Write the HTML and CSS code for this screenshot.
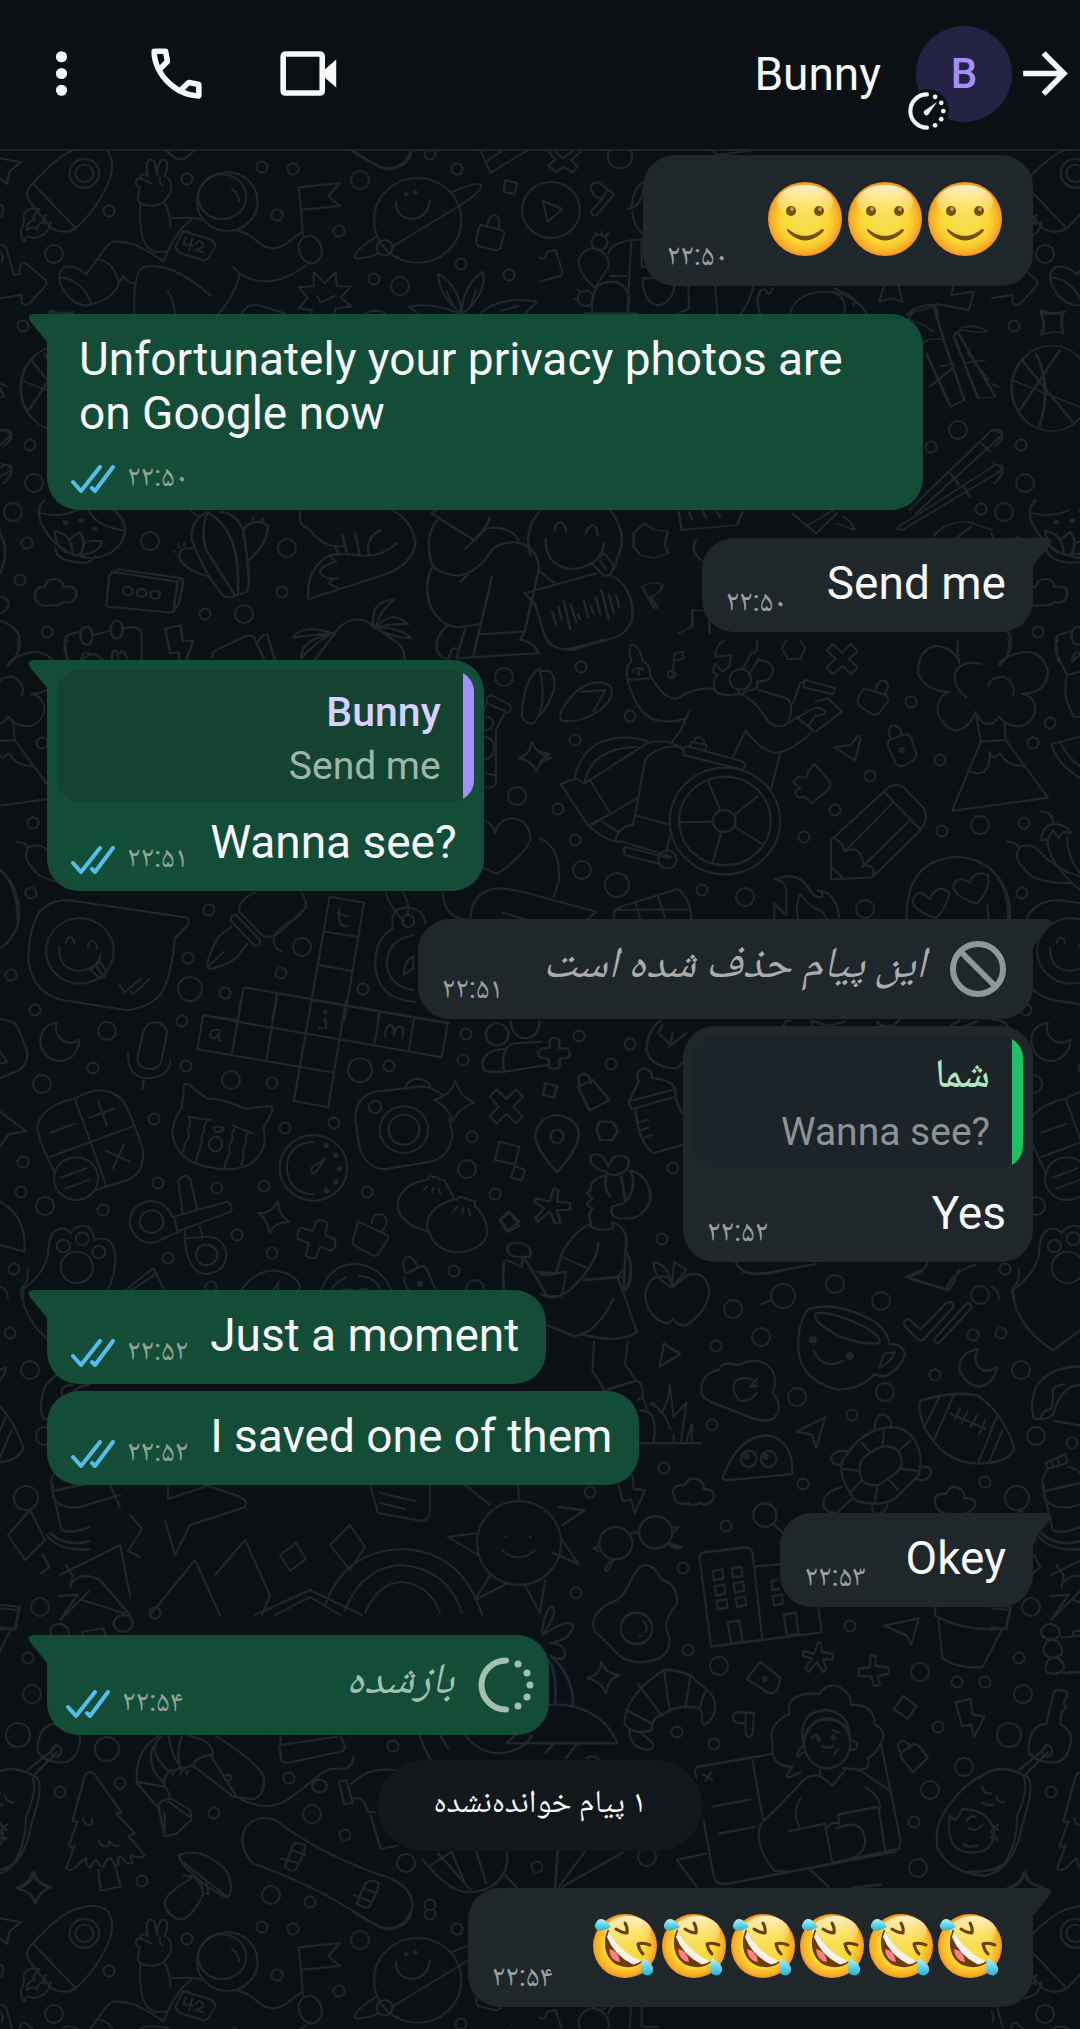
FILE: index.html
```html
<!DOCTYPE html>
<html lang="fa">
<head>
  <meta charset="UTF-8">
  <meta name="viewport" content="width=device-width, initial-scale=1.0">
  <title>Bunny</title>
  <link rel="stylesheet" href="styles.css">
</head>
<body>
  <!-- shared shapes -->
  <svg class="defs" aria-hidden="true">
    <defs>
      <radialGradient id="face" cx="50%" cy="50%" r="52%">
        <stop offset="0" stop-color="#f7de5a"/>
        <stop offset=".6" stop-color="#fad933"/>
        <stop offset=".85" stop-color="#fbb42a"/>
        <stop offset="1" stop-color="#ee8a1c"/>
      </radialGradient>
      <linearGradient id="shine" x1="0" y1="0" x2="0" y2="1">
        <stop offset="0" stop-color="#fff7d2" stop-opacity=".95"/>
        <stop offset="1" stop-color="#fff3b0" stop-opacity="0"/>
      </linearGradient>
      <linearGradient id="drop" x1="0" y1="0" x2="0" y2="1">
        <stop offset="0" stop-color="#b5f3fa"/>
        <stop offset="1" stop-color="#22b4d6"/>
      </linearGradient>
      <symbol id="smile" viewBox="0 0 75 76">
        <circle cx="37" cy="38" r="37" fill="url(#face)"/>
        <ellipse cx="37" cy="21" rx="28" ry="17" fill="url(#shine)"/>
        <ellipse cx="23" cy="30" rx="5" ry="5" fill="#7a4a08"/>
        <ellipse cx="51" cy="30" rx="5" ry="5" fill="#7a4a08"/>
        <ellipse cx="24" cy="28" rx="2" ry="2" fill="#c09a6a"/>
        <ellipse cx="52" cy="28" rx="2" ry="2" fill="#c09a6a"/>
        <path d="M20 48Q37 62 54 48Q57 48 55 51Q37 68 20 51Q18 48 20 48Z" fill="#7a4a08"/>
      </symbol>
      <symbol id="rofl" viewBox="0 0 64 66">
        <circle cx="32" cy="33" r="32" fill="url(#face)"/>
        <ellipse cx="35" cy="18" rx="23" ry="15" fill="url(#shine)"/>
        <path d="M15 16C7 34 15 53 33 54Q43 55 49 49Q28 42 15 16Z" fill="#6b3d0c"/>
        <path d="M16 36Q26 38 27 49Q17 48 16 36Z" fill="#ff7f84"/>
        <path d="M16 18Q28 40 48 48Q44 52 39 51Q21 42 14 24Z" fill="#f7f1e8"/>
        <path d="M23 16Q29 20 34 20Q35 15 32 10M57 32Q50 29 45 31Q46 37 50 41" fill="none" stroke="#6b3d0c" stroke-width="3" stroke-linecap="round" stroke-linejoin="round"/>
        <path d="M18 14Q11 3 5 7Q0 12 3 16Q8 20 18 14Z" fill="url(#drop)"/>
        <path d="M50 45Q62 52 60 58Q57 65 50 61Q46 57 50 45Z" fill="url(#drop)"/>
      </symbol>
      <symbol id="ticks" viewBox="0 0 44 28">
        <path d="M2 17L10 26L29 2M21 23L24 26L42 2" fill="none" stroke="#53bdeb" stroke-width="4" stroke-linecap="round" stroke-linejoin="round"/>
      </symbol>
      <symbol id="timer" viewBox="0 0 56 56">
        <path d="M28 3.500A24.500 24.500 0 0 0 28 52.500" fill="none" stroke="currentColor" stroke-width="6" stroke-linecap="round"/>
        <g fill="currentColor">
          <circle cx="40" cy="7" r="3.500"/><circle cx="49" cy="16" r="3.500"/><circle cx="52" cy="28" r="3.500"/><circle cx="49" cy="40" r="3.500"/><circle cx="40" cy="49" r="3.500"/>
        </g>
      </symbol>

      <!-- chat wallpaper -->
      <path id="dots" d="M109 211h0M187 179h0M262 167h0M293 169h0M277 215h0M339 231h0M457 169h0M430 154h0M374 279h0M461 264h0M509 275h0M27 543h0M20 580h0M47 632h0M205 614h0M282 592h0M931 447h0M30 445h0M981 509h0M23 326h0M42 743h0M33 823h0M31 893h0M209 910h0M188 958h0M11 975h0M281 973h0M225 993h0M363 989h0M35 1010h0M581 667h0M630 716h0M575 740h0M558 809h0M575 840h0M702 890h0M870 776h0M835 810h0M804 837h0M911 702h0M940 760h0M942 831h0M59 723h0M93 1068h0M182 1021h0M186 1066h0M272 1083h0M154 1119h0M23 1162h0M21 1192h0M103 1210h0M158 1183h0M217 1188h0M264 1186h0M285 1128h0M334 1123h0M367 1192h0M389 1066h0M466 1034h0M463 1060h0M472 1137h0M495 1194h0M237 1235h0M168 1258h0M272 1253h0M454 1271h0M14 1269h0M211 1287h0M579 1036h0M630 1044h0M611 1064h0M673 1168h0M662 1239h0M716 1346h0M664 1468h0M712 1425h0M852 1415h0M803 1484h0M935 1375h0M973 1335h0M10 1333h0M985 1482h0M726 1526h0M683 1568h0M576 1593h0M590 1492h0M688 1650h0M850 1626h0M957 1682h0M985 1682h0M28 1658h0M938 1727h0M677 1732h0M714 1744h0M914 1822h0M81 1443h0M155 1613h0M120 1783h0M60 1792h0M214 1813h0M289 1778h0M142 1881h0M345 1835h0M393 1746h0M310 1902h0M430 1905h0M537 1867h0"/>
      <path id="rings" d="M54 254h0M360 180h0M400 286h0M13 512h0M150 541h0M287 548h0M244 614h0M958 430h0M34 483h0M302 947h0M504 677h0M517 796h0M582 870h0M745 897h0M865 909h0M980 825h0M107 1031h0M42 1084h0M45 1206h0M231 1080h0M467 1169h0M475 1289h0M835 1284h0M733 1309h0M761 1337h0M881 1301h0M980 1295h0M30 1370h0M45 1436h0M797 1397h0M885 1392h0M719 1666h0M920 1672h0M32 1694h0M40 1607h0M964 1767h0M930 1790h0M918 1868h0M647 1857h0M271 1895h0M312 1814h0M406 1863h0"/>
      <path id="hoops" d="M190 989h0M617 885h0M360 1070h0M26 1498h0M18 1735h0M783 1296h0M107 1749h0"/>
      <g id="doodles" fill="none" stroke="#20262a" stroke-width="6" stroke-linecap="round" stroke-linejoin="round">
        <use href="#dots" stroke-width="13"/><use href="#dots" stroke-width="9" stroke="#0b1014"/>
        <use href="#rings" stroke-width="20"/><use href="#rings" stroke-width="16" stroke="#0b1014"/>
        <use href="#hoops" stroke-width="26"/><use href="#hoops" stroke-width="22" stroke="#0b1014"/>

        <!-- rocket, astronaut, planet -->
        <g transform="scale(.3444 .3333)">
          <path d="M95 550Q180 455 230 445Q280 425 315 455Q340 500 305 570Q270 640 220 685Q190 705 150 685L90 610Q65 580 95 550L220 685"/>
          <circle cx="245" cy="520" r="43"/><circle cx="245" cy="520" r="26"/>
          <path d="M115 627Q75 620 68 650Q75 670 60 690Q60 715 72 725Q75 700 95 715Q140 710 147 665M115 627Q90 650 100 660Q75 665 78 690Q100 675 105 690Q115 660 130 672Q120 650 135 645"/>
          <path d="M0 475L60 487L27 515L20 552L0 535M0 615Q15 615 5 650M0 735Q20 735 20 750L40 825L58 822V800Q65 780 80 795L133 840Q138 850 130 860L85 912Q70 920 62 905V885L0 895M0 755Q12 765 5 785"/>
          <path d="M405 560C390 560 390 535 410 535C405 520 430 520 430 530C420 490 430 475 440 480C455 480 450 510 457 525C455 500 465 475 478 480C495 490 480 520 478 530C505 540 500 580 480 600C460 625 410 620 400 600ZM465 530Q460 545 472 558M410 535Q430 545 440 550"/>
          <path d="M407 610Q400 740 450 755H485M478 610Q495 640 495 678M500 655Q560 650 590 660M555 660Q510 690 475 785Q390 720 330 725Q310 730 285 775L250 823Q220 795 190 800Q165 815 175 850Q200 910 250 917Q330 900 345 850L358 828Q370 850 392 850M175 832Q240 840 265 912M285 778Q330 785 345 850M390 945Q385 810 420 800Q500 785 612 887M488 875Q505 900 508 945M630 945Q680 895 697 822M678 802Q720 850 790 843Q840 835 890 795M690 692C740 700 750 745 790 745C835 745 850 705 880 697"/>
          <circle cx="660" cy="605" r="88"/><ellipse cx="645" cy="590" rx="70" ry="67"/>
          <path d="M673 567Q693 580 694 604M527 692L610 718Q630 730 623 745L605 775Q595 785 580 778L525 760Q508 750 510 740L527 702Q535 690 550 695"/>
          <path d="M540 712L532 732L560 738M558 715L550 750M568 732Q580 715 590 732Q592 742 568 750L592 758"/>
          <path d="M880 705L868 562L987 549L953 588L987 618L876 629M868 730Q880 705 905 708Q935 720 935 760Q930 790 900 790Q870 780 866 740Z"/>
          <path d="M912 817L943 850L974 817L978 858L1018 860L990 893L1020 920L975 925L970 945M910 817L912 858L868 862L893 893L868 925L905 930V945M920 888L932 908L972 888"/>
          <circle cx="1213" cy="661" r="127"/><circle cx="1117" cy="743" r="23"/>
          <circle cx="1180" cy="581" r="4"/><circle cx="1205" cy="577" r="4"/>
          <path d="M1150 606Q1150 655 1200 657Q1245 650 1247 600M1142 738L1330 620Q1400 575 1397 555Q1380 545 1315 575M1095 708Q1025 755 1030 773Q1050 780 1100 760M1025 452Q1100 508 1130 507Q1190 500 1195 452M1395 452L1425 518L1530 452M1410 485L1455 455M483 452Q510 480 525 478Q545 475 560 452"/>
          <path d="M1467 541L1502 550L1493 583L1463 575ZM1395 675L1457 690Q1467 695 1463 705L1452 745Q1447 753 1435 750L1388 738Q1380 730 1383 720L1390 685Q1393 674 1400 677M1415 678Q1420 640 1440 647Q1455 655 1448 687"/>
          <path d="M1340 940Q1275 890 1272 822Q1335 860 1340 940Q1345 855 1402 815Q1415 880 1345 940M1297 875L1317 920M1382 872L1367 918M1340 945Q1265 905 1187 920L1220 945M1390 945Q1450 885 1560 905L1520 945M1455 932L1505 918"/>
          <path d="M700 945Q715 910 750 915L825 940M147 930L160 945M215 935L200 945M147 932Q180 945 215 935M1060 940Q1090 925 1120 940"/>
        </g>

        <!-- play, candy, cactus -->
        <g transform="translate(540 0) scale(.3444 .3333)">
          <circle cx="32" cy="630" r="84"/>
          <path d="M8 603L65 627L22 665ZM45 455L67 475L95 453M118 455L90 480L108 500L95 518L67 500L48 517L25 497L45 478L25 455M150 570Q140 550 170 547L215 583L165 645Q150 650 148 635L180 597Q150 590 150 570M182 595L195 570"/>
          <circle cx="232" cy="470" r="35"/><circle cx="173" cy="727" r="23"/><circle cx="133" cy="895" r="23"/>
          <path d="M160 863Q110 820 112 780Q125 745 160 745Q200 760 200 800ZM152 940Q145 870 180 850Q240 830 260 890L255 945M165 705L160 697M178 702L180 695M190 708L200 700M115 875L110 868M108 897H100M198 760Q210 720 300 718M265 725L253 945M204 828H250M130 940H280"/>
          <path d="M255 627Q300 620 303 545Q270 560 265 625M268 635Q275 690 305 705M295 720V800H340M298 835H390Q395 900 345 917Q300 910 298 840M430 850L433 925L400 940M508 850L515 945M620 850Q615 900 580 945M725 940C740 890 790 870 850 877C900 880 940 920 950 945M850 875Q900 900 880 945M855 865Q900 885 915 900L910 915M630 900Q640 860 655 870Q665 895 675 865M985 905L1000 855M985 905L1020 895L1053 905L1040 855M1200 860L1195 885L1260 875L1245 930L1150 912M500 452L515 465L610 452"/>
          <path d="M1065 945Q1100 910 1150 915L1155 945M640 945Q625 900 640 870M0 773Q15 785 20 755L45 750L65 815Q65 830 50 830L0 845"/>
        </g>

        <!-- globe, bamboo, chopsticks -->
        <g transform="translate(0 300) scale(.6888 .3333)" stroke-width="4">
          <ellipse cx="88" cy="265" rx="58" ry="128"/><path d="M65 160Q90 260 70 380M30 240L140 330M45 180L120 370M100 150L42 330"/>
          <path d="M1340 30L1355 15L1370 120Q1350 110 1340 130M1340 30Q1320 30 1320 60Q1340 70 1355 95M1370 120L1385 210L1400 300L1380 320L1345 160M1390 95L1445 290L1420 295L1385 110Q1390 80 1410 95Q1440 100 1430 90Q1410 70 1395 85M1365 200L1385 190M1350 260L1385 200M1400 190L1430 180M1405 160L1435 240"/>
          <path d="M1510 35Q1528 50 1543 38Q1540 70 1543 100Q1530 90 1512 105Q1520 70 1510 35M1320 630L1440 390Q1455 385 1455 405L1330 640M1305 680L1445 495Q1458 490 1455 510L1310 690Q1300 690 1305 680M1425 430L1438 455M1380 520L1392 555M1400 560L1408 590"/>
          <path d="M1150 640L1185 700L1215 640M1170 680L1210 630M1225 650Q1240 670 1240 690L1215 670M985 635L990 690L1070 675L1078 635M1000 635L1005 660M1020 632L1025 655M1040 632L1045 650M920 700L935 670L950 690L970 695L965 730L970 760L950 775L930 765L920 740ZM1355 710Q1370 665 1405 665L1440 690M1390 712L1410 680"/>
          <path d="M932 860Q950 840 962 855Q960 880 945 890L955 925M932 860L950 925M1010 720Q1000 760 1025 790"/>
          <path d="M0 250L10 260M0 390Q30 400 5 440M0 490Q30 500 5 550"/>
          <path d="M985 1000L1005 980V930L1030 935V1000"/>
        </g>

        <!-- lotus bowl, cactus, tail, sitting person -->
        <g transform="translate(0 500) scale(.4082 .3333)">
          <path d="M110 0Q80 30 110 90Q150 170 230 175Q300 160 307 90Q300 40 270 25M95 38Q150 55 190 30M217 30Q235 80 307 92M135 145Q140 190 215 188L235 168M133 93Q175 100 178 160Q140 160 133 93M168 120L195 95Q215 130 195 165M205 130Q230 118 250 125Q245 165 180 165"/>
          <circle cx="160" cy="67" r="4"/><circle cx="199" cy="62" r="4"/><circle cx="232" cy="87" r="4"/>
          <path d="M85 290Q85 260 110 260Q115 235 135 237Q155 240 155 260Q190 255 187 285Q180 315 155 305Q145 320 130 315Q90 325 85 290M275 215L435 245L425 335Q420 340 410 337L265 320Q258 315 262 300L268 225L290 208L445 235Q450 240 448 250L438 310L425 335M435 245L445 235"/>
          <circle cx="313" cy="273" r="12"/><circle cx="347" cy="279" r="12"/><circle cx="380" cy="284" r="12"/>
          <path d="M510 35Q465 60 470 120Q500 220 545 285Q555 295 570 290L605 275Q610 260 610 240Q605 150 595 90Q580 40 540 35M510 38Q490 80 505 150L575 285M510 38Q590 90 583 278M470 145Q440 140 438 170Q455 215 510 228M595 100Q600 65 635 65Q660 70 655 95Q650 135 607 185M438 142L437 130M450 138L453 128M430 155H428M620 60V53M643 62V55M655 82L660 77M465 30Q480 50 490 48"/>
          <path d="M737 30Q730 70 745 80L755 85M750 78Q790 140 825 138L848 140M820 138L830 160M838 102L850 160M870 97L880 160M933 90Q895 110 903 165M972 130Q935 170 890 167Q830 160 810 165Q750 200 755 298L950 220Q1010 190 1018 130Q1010 60 960 30M810 170Q815 180 823 185Q780 200 785 220Q800 240 825 235Q800 245 810 255L828 265"/>
          <path d="M1070 30L1057 40L1163 122L1190 85Q1250 75 1270 120M1200 53Q1190 90 1140 145M1075 55Q1040 100 1055 180Q1060 220 1120 227Q1170 220 1205 150Q1225 125 1265 127Q1320 140 1320 210L1285 395L1175 403M1128 245L1145 225M1062 195Q1035 250 1055 320Q1080 380 1125 382L1175 372M1205 232L1160 465M1140 385L1118 475L1320 460Q1310 430 1275 418L1285 395M1095 378Q1065 410 1070 450Q1080 480 1100 475L1105 450Q1115 440 1125 450"/>
          <path d="M1322 215L1358 248M1325 30Q1280 90 1300 165M1495 30Q1530 90 1522 140L1505 205M1358 92Q1360 65 1375 67Q1385 75 1387 95M1435 102Q1440 75 1455 77Q1465 85 1464 105M1337 115Q1335 195 1395 207Q1470 205 1480 130M1450 190L1480 160L1503 195Q1500 230 1480 228L1448 188M1468 180L1485 208M1285 280L1460 220M1500 228Q1550 260 1550 350Q1540 400 1500 415L1400 450Q1340 450 1330 390L1310 310L1285 280"/>
          <path d="M1353 335L1362 373M1368 320L1376 360M1381 302L1397 387M1398 313L1412 368M1415 343L1422 357M1430 302L1441 353M1447 318L1455 342M1460 292L1472 347M1473 270L1491 357M1492 283L1503 337M1509 285L1517 322"/>
          <path d="M0 100Q25 150 0 220M0 290Q25 295 20 320Q10 340 0 340M0 362Q70 390 40 470L20 497M195 395L165 405Q155 420 160 440L165 485M230 405L270 392M300 385Q345 375 347 400V485M200 485Q225 440 255 485M275 485V455Q290 440 290 485M295 460Q300 440 315 485"/>
          <ellipse cx="212" cy="407" rx="15" ry="27"/><ellipse cx="286" cy="389" rx="15" ry="27"/>
          <path d="M405 387L443 375L447 422L473 423L455 485M405 387L417 460L437 457L440 485M520 470Q520 455 530 450L600 410Q620 400 625 420L650 485M632 425L645 405L655 405L675 485M768 485L830 385Q860 345 900 365L975 430Q995 450 990 485M718 413Q740 370 815 400Q760 405 718 413M738 475Q735 420 810 402Q770 430 738 475M915 385Q905 300 965 300Q930 330 920 385Q960 325 1000 373Q950 370 920 385Q980 380 1007 415Q970 415 920 385"/>
        </g>

        <!-- speech bubble, pen, crossword top -->
        <g transform="translate(0 640) scale(.3444 .3333)">
          <path d="M195 780L545 833Q550 845 545 855L508 895Q500 990 475 1050Q440 1105 365 1110L180 1080Q95 1060 82 960Q85 860 115 815Q145 780 195 780M0 690Q60 740 55 840Q40 900 0 925"/>
          <circle cx="232" cy="933" r="98"/>
          <path d="M190 912Q195 890 203 892Q215 895 216 912M255 922Q260 900 270 903Q282 910 282 925M172 922Q170 990 230 993Q285 985 292 943M262 990L290 965L308 992Q308 1015 290 1015L262 988M280 980L295 1002M348 1035L362 1057L410 1015M380 1055L387 1063L433 1018"/>
          <path d="M740 758Q690 780 695 815L765 890Q800 895 830 860L890 800Q885 770 875 758M672 845Q665 825 685 825L755 900Q755 920 740 918ZM672 860L635 890Q605 940 602 975Q605 990 620 985Q660 975 690 950L718 912M605 980L650 935M887 795Q885 815 860 835Q790 870 795 905Q800 930 817 933"/>
          <path d="M957 770L1057 788L1000 1140M957 770L905 1080M943 875L1040 890M927 975L1022 993M985 805V840Q990 865 1010 858M980 820L1010 830M708 1042L1305 1150M708 1042L690 1140M805 1058L790 1140M590 1127L690 1140M1100 1115L1097 1140"/>
          <path d="M1120 758Q1130 800 1175 845M1170 758Q1190 790 1185 820M1140 860Q1130 800 1190 803Q1230 810 1235 850M1140 865Q1085 900 1090 980Q1100 1080 1205 1085M1200 885Q1125 900 1123 970Q1130 1040 1200 1050M1172 1005Q1175 960 1200 950V985ZM1285 758Q1290 840 1365 840Q1370 755 1440 745Q1490 745 1568 770M1458 818L1530 840"/>
          <circle cx="1185" cy="843" r="18"/><circle cx="1412" cy="250" r="20"/>
          <path d="M1425 165L1480 195Q1490 210 1475 218L1415 190Q1405 175 1425 165M1412 190L1400 230M1465 220L1440 270V420Q1440 445 1415 443Q1395 440 1395 420M1400 290Q1435 290 1435 325Q1430 360 1398 360M1398 390Q1410 405 1438 405M1568 85Q1520 110 1515 230Q1530 255 1550 250Q1590 200 1568 90M1505 355Q1540 345 1543 305Q1560 345 1600 355Q1565 360 1558 395Q1545 360 1505 355"/>
          <path d="M1397 540Q1430 545 1437 580Q1450 535 1490 535Q1540 545 1540 600Q1520 650 1443 702L1397 680"/>
        </g>

        <!-- wheelchair, pencil, volcano -->
        <g transform="translate(540 640) scale(.3444 .3333)">
          <path d="M255 120Q245 80 265 65Q255 20 265 15Q285 10 300 65Q320 70 320 115ZM270 95Q270 80 300 85Q275 95 290 105M255 122Q280 220 335 240Q380 250 418 237M323 110Q360 180 400 175Q450 140 508 147M433 215L408 272L380 310M385 105L390 40L415 35L417 55L393 62"/>
          <circle cx="382" cy="103" r="11"/>
          <path d="M537 0Q505 20 510 50L555 45L550 80L530 95L508 70L502 95L515 105L505 120V145Q510 165 545 165Q590 165 605 150M630 0Q635 30 620 40M613 40L590 85M637 55L605 105M630 60Q675 60 677 95Q670 125 630 125Q640 150 600 152M577 145V160Q620 175 650 225Q670 265 705 258Q720 250 750 230M635 150L715 175Q740 190 722 240M735 190L755 130L770 123M770 120L857 145L850 163L765 142ZM745 235L785 210Q810 195 828 215Q830 225 800 228L780 255L795 275L750 235M800 185L835 175L877 215L803 273M783 283Q720 340 680 338Q640 330 597 272L560 350M697 342L670 450"/>
          <circle cx="582" cy="118" r="31"/>
          <path d="M100 415Q120 330 180 305Q250 280 315 305M130 430L310 310Q380 290 420 335M130 425Q150 325 280 320M60 432L105 415L125 430L145 420L205 522L140 557ZM140 557Q200 610 240 605L380 650M180 545L225 575M280 475L150 555M410 320Q340 315 305 360L285 475L270 555Q225 560 220 600M280 527L372 553M245 620L375 655M245 620Q240 645 255 648L350 672M377 590L367 635"/>
          <path d="M425 318L590 365Q600 375 590 390L418 345Q408 330 425 318M435 322L440 305L485 315L480 330M447 305Q450 290 465 292Q480 300 475 315"/>
          <circle cx="537" cy="543" r="160"/><circle cx="537" cy="543" r="133"/><circle cx="535" cy="543" r="33"/><circle cx="370" cy="658" r="27"/>
          <path d="M488 423L523 510M565 525L632 468M568 562L645 612M527 577L502 665M403 547L500 545"/>
          <path d="M60 240Q50 210 110 150Q170 110 205 140Q220 170 175 210Q110 255 60 240M120 155L190 150L155 215M0 95Q50 80 40 150Q20 210 0 225M0 335L27 342L0 365M20 5Q60 40 110 20L185 0"/>
          <path d="M715 0L702 25L720 57H755L770 25L755 0M833 30L850 12L877 38L903 12L922 35L897 57L922 82L905 103L878 78L850 103L832 82L858 57ZM940 145L1005 165Q1015 175 1008 188L982 222Q973 228 960 220L925 195Q920 185 925 170ZM975 148Q980 120 1000 122Q1020 135 1000 162M1015 300L1060 283Q1072 283 1078 295L1092 340Q1095 352 1085 360L1055 378Q1040 382 1032 368L1010 320Q1008 305 1015 300M1018 298Q1005 255 1030 255Q1050 265 1050 285"/>
          <circle cx="1050" cy="331" r="6"/>
          <path d="M855 322L902 315L925 287Q932 290 930 300L915 362L890 345ZM797 372L842 425Q845 440 835 450L790 490L768 470Q740 480 742 450L755 445L735 427L750 410Q780 420 778 395Z"/>
          <path d="M998 455Q1030 420 1060 447L1115 505Q1130 540 1105 570L965 712L845 718V600ZM998 455L1105 570M1025 487L885 635M1075 540L935 682M858 597Q880 610 885 635Q930 610 940 675Q980 680 965 712M845 680L880 715"/>
          <path d="M1218 70Q1200 20 1150 18Q1095 30 1098 100Q1120 155 1190 155Q1150 170 1155 220Q1180 275 1215 270Q1250 260 1265 215Q1280 255 1305 252Q1320 250 1333 230Q1360 265 1400 257Q1440 240 1438 200Q1430 165 1400 162Q1470 160 1475 95Q1460 30 1400 37Q1340 50 1333 75Q1370 50 1360 0M1213 0Q1210 40 1218 70M1237 172Q1190 130 1210 90Q1230 60 1283 72M1300 137Q1310 110 1345 110Q1385 130 1373 167M1265 215L1280 305L1197 512L1475 473L1352 300L1348 245M1280 305L1352 300M1252 395Q1265 405 1290 395Q1310 370 1305 335Q1315 360 1325 350Q1335 330 1345 355Q1370 380 1405 378"/>
          <path d="M680 718Q750 690 780 745Q800 780 820 770Q820 750 805 752Q860 750 870 840M680 718Q720 720 715 770V825L680 790V840M755 762Q780 800 820 815L835 840M755 762Q740 800 750 840M215 835V815Q225 805 235 800L400 747Q440 780 440 840M215 810L435 808M278 790L292 840M342 767L365 840M0 770L163 815L135 840M0 595Q60 620 55 720L40 770"/>
          <path d="M1065 840Q1060 660 1210 650Q1360 660 1360 840M1298 795L1303 840M1150 835Q1080 810 1082 780Q1100 740 1132 778Q1150 730 1187 755Q1190 790 1150 835M1268 790Q1200 770 1200 735Q1215 705 1248 728Q1260 690 1300 705Q1310 750 1268 790"/>
          <path d="M1485 312L1568 290M1485 312Q1500 370 1568 415M1512 310Q1530 350 1568 380M1455 515Q1490 515 1490 550M1455 600Q1460 550 1500 552Q1535 560 1543 580L1520 575L1505 595L1490 570L1475 597ZM1473 600Q1475 670 1568 750M1530 590Q1530 650 1568 700M1357 605Q1385 605 1390 625M1405 685Q1370 650 1395 620Q1430 610 1445 630Q1500 690 1568 710M1405 685Q1430 730 1540 730"/>
          <path d="M1505 0Q1490 20 1500 40L1530 105Q1520 150 1530 185L1550 230H1568M1530 105L1568 95M1545 60Q1550 30 1568 40"/>
        </g>

        <!-- moon, mic, calculator, cat, camera, scissors -->
        <g transform="translate(0 1000) scale(.3444 .3333)">
          <path d="M165 68Q115 75 117 130Q130 185 180 183Q230 170 230 118Q200 140 175 115Q155 90 165 68M415 100Q425 65 455 67Q490 75 483 110L468 185Q460 210 430 207Q395 200 400 170ZM372 160Q370 225 420 235Q490 235 495 183M418 240L413 267M0 58Q40 60 50 80L78 150Q85 190 55 210L0 235M0 155L22 187L0 190M0 335L75 393L25 403L0 440"/>
          <path d="M590 45L573 148L970 218M590 45L690 65L985 118L1283 172L1300 70L905 0M700 0L673 165M803 0L773 183M905 0L853 303L953 322L1005 0M1103 35L1087 132M1202 55L1187 152M690 65L700 0"/>
          <path d="M635 90Q610 85 610 110Q625 125 638 95Q630 120 642 122M943 55L948 80Q945 90 927 83M1118 110Q1118 80 1133 75Q1148 80 1143 105Q1150 75 1165 80Q1175 90 1168 115"/><circle cx="944" cy="36" r="4"/>
          <path d="M220 295Q300 245 355 300Q385 350 415 450Q420 520 370 540L278 570M220 295Q130 315 110 370Q100 400 160 520M218 300L308 555M140 473L388 378M147 398L218 371M260 353L332 326M285 305L310 377M307 452L378 486M360 433L328 505M178 533L250 505M190 566L262 538"/>
          <circle cx="221" cy="536" r="64"/><circle cx="440" cy="665" r="34"/><circle cx="600" cy="765" r="31"/>
          <path d="M528 322L535 255Q542 245 555 260L600 295Q650 295 713 327L785 317Q792 320 790 335L765 385Q780 450 730 490Q680 520 600 500Q510 480 500 400Q502 360 528 322M545 350L612 361M677 377L735 401M620 383Q635 375 650 385Q640 400 625 395ZM550 358Q555 375 545 390Q555 410 540 425Q535 440 530 455M600 363Q590 380 593 395Q580 410 587 430Q575 450 570 485M682 383Q670 400 675 420Q660 440 668 460Q655 480 652 503M722 397Q710 410 715 430Q700 450 708 470L700 495"/>
          <ellipse cx="626" cy="433" rx="19" ry="22"/><circle cx="910" cy="504" r="98"/>
          <path d="M910 425Q835 430 832 505Q840 580 910 583M945 475L905 503Q900 515 912 520Q920 515 945 475"/>
          <g fill="#20262a" stroke="none"><circle cx="947" cy="436" r="8"/><circle cx="975" cy="466" r="8"/><circle cx="986" cy="506" r="8"/><circle cx="975" cy="546" r="8"/><circle cx="948" cy="573" r="8"/><circle cx="1219" cy="851" r="9"/></g>
          <path d="M1285 285Q1250 255 1210 260L1090 275Q1030 290 1032 360L1045 450Q1070 510 1120 507L1250 485Q1310 470 1313 400L1305 355M1177 260Q1190 235 1215 237Q1245 240 1250 260M1260 300Q1310 285 1322 243Q1335 290 1377 308Q1335 320 1315 362Q1300 320 1260 300"/>
          <circle cx="1173" cy="389" r="70"/><circle cx="1173" cy="389" r="45"/><circle cx="1089" cy="321" r="18"/>
          <path d="M1422 290L1442 268L1470 297L1498 268L1519 290L1490 320L1518 350L1498 370L1470 342L1442 370L1422 350L1448 320ZM1450 425L1508 440L1495 493L1437 480ZM1495 498L1524 510L1515 542L1483 532Z"/>
          <path d="M1240 693Q1150 670 1155 605Q1170 550 1240 540Q1250 520 1258 533Q1270 525 1275 540Q1290 535 1295 550L1320 598M1320 598Q1240 620 1240 680Q1260 760 1340 757Q1420 740 1415 685Q1405 640 1380 620L1378 603L1365 600L1350 595L1335 590L1325 600M1240 560L1230 570M1258 563L1255 577M1273 567L1280 583M1327 620L1317 632M1345 625L1342 640M1360 628L1365 645"/>
          <path d="M500 650Q480 600 430 603Q370 620 378 680Q400 735 450 727L520 695M505 650L660 605Q680 620 670 635L515 695ZM530 638L518 545Q535 515 553 538L572 627M537 693V720Q545 820 600 822Q660 815 657 755Q645 710 600 710L540 715M580 680L587 705"/>
          <path d="M807 605Q810 650 840 665Q800 665 783 698Q775 655 750 640Q790 640 807 605M920 663Q935 655 950 670L945 705L972 718Q980 740 960 752L930 740L918 772Q900 780 888 765L897 730L865 718Q860 690 875 683L907 693ZM1040 665L1125 705Q1130 715 1122 725L1097 765Q1085 770 1075 762L1027 735Q1020 720 1027 712ZM1080 670Q1080 640 1110 643Q1135 660 1110 692M1480 638L1508 678L1478 695L1453 660ZM1180 820L1225 798Q1235 798 1240 808L1265 870M1175 830Q1170 850 1190 875M1178 820Q1160 780 1185 770Q1205 775 1212 800"/>
          <path d="M0 605Q80 650 70 755L0 735M65 870Q130 820 140 760Q140 690 180 685Q200 690 205 700Q225 670 255 680Q275 700 272 720Q330 700 335 770Q335 830 310 875M65 870L68 895"/>
          <circle cx="184" cy="738" r="19"/><circle cx="239" cy="716" r="19"/><circle cx="287" cy="756" r="19"/><circle cx="223" cy="802" r="47"/>
          <path d="M358 875L445 805L480 875M375 875L455 820M698 875Q740 810 800 812Q860 820 872 862L860 875M790 875L810 845L805 875M930 875Q960 790 1035 792Q1110 800 1138 875M962 870Q970 850 1005 832M1042 828Q1090 830 1105 870M985 875Q1010 860 1030 875M1040 872Q1060 860 1075 875M0 860Q25 870 22 895"/>
        </g>

        <!-- people, pin, bottle -->
        <g transform="translate(400 900) scale(.4337 .3333)">
          <ellipse cx="224" cy="403" rx="26" ry="33"/><path d="M255 365Q260 415 290 415Q320 410 322 365M240 515Q230 440 265 430L325 425M240 515H205Q190 515 190 490Q195 450 240 447M240 515L340 495M345 420Q355 405 367 420V445H385Q400 460 385 475H368V500Q355 515 343 500V478L320 470Q315 450 330 445L345 443Z"/>
          <path d="M415 560Q405 525 425 520Q440 530 440 550M410 560L445 540L483 600L437 632ZM335 550L363 558L355 593L330 585ZM362 817Q310 740 312 705Q320 650 362 645Q410 655 413 705Q405 760 362 817M460 665H490L502 692L490 720H462L453 690Z"/><ellipse cx="362" cy="709" rx="15" ry="20"/>
          <path d="M550 545Q540 510 565 505Q585 515 580 535Q630 540 635 570V590L535 627Q525 610 530 600L550 545M530 603L635 568M543 630Q550 730 585 760L650 735M635 595L650 640M550 667L570 660M555 690L572 683M560 715L580 705M568 450Q570 390 600 362M605 375L595 400M568 450Q580 505 640 505L650 490M600 405L620 430M630 400L620 440L660 400"/>
          <path d="M355 865L365 870L362 905L392 908V930L362 930L370 968L358 970L345 935L318 965L312 955L332 925L310 905L315 895L345 905ZM250 935L275 965L247 995L230 960Z"/>
          <path d="M475 815Q430 800 442 765Q470 755 480 800Q495 750 525 775Q535 810 500 825Q475 825 475 815M475 825Q435 840 440 870L430 880L443 895L430 915L445 925Q430 945 440 965L440 980Q460 995 490 985V965M475 830Q470 870 485 890M510 830L520 905Q550 860 530 810Q580 830 577 900Q560 960 520 955Q480 960 490 920L515 910"/>
          <path d="M437 972Q395 1000 370 1070L430 1103M493 968Q530 990 520 1050L515 1170M457 1030Q455 1090 400 1160Q360 1210 330 1185M370 1075L360 1120L313 1115M422 1140L510 1130M520 1050Q545 1110 520 1170"/>
          <path d="M250 1035Q270 1020 290 1035Q305 1045 300 1070H265Q240 1060 250 1035M245 1080L280 1100L285 1070M240 1085Q235 1130 240 1170M290 1080L340 1190"/>
          <path d="M775 1090Q790 1125 830 1122L960 1092M1215 1090Q1210 1120 1168 1132L1260 1170Q1270 1120 1325 1095"/>
          <path d="M885 375Q890 360 900 362M950 362V378M950 362L985 378L1025 365M1100 365Q1110 385 1140 375L1150 362M1270 375L1290 362M1300 380L1330 365"/>
        </g>

        <!-- apple, cup, football, turtle, egg, city, reader, avocado -->
        <g transform="translate(540 1270) scale(.3444 .4018)">
          <path d="M0 10Q30 15 48 8L75 5Q70 50 60 65H20L0 60M125 25L225 18L243 60L282 155Q230 185 120 160L100 165L0 130M213 73Q170 145 120 160M225 18L240 0M262 0Q270 35 243 52M157 178L152 250L190 303M255 178L247 235L280 275L195 298M280 275Q300 280 298 318L285 322M300 320L310 345M330 428Q345 345 290 350M320 333Q360 345 378 395M328 330L352 355Q375 330 377 287L388 365L425 330L410 425M440 385L427 420M388 408V428M425 425L442 385L440 428M285 431H467"/>
          <path d="M380 22Q320 0 305 60Q310 120 370 133L387 122Q400 140 425 137Q490 100 492 50Q480 0 430 12L382 43Q330 20 330 -20Q375 -15 382 43L390 -20L425 0L382 43M642 85L672 75M590 5Q640 15 710 0M1062 17L1185 50Q1205 30 1215 0M1062 17L1110 0M360 183L407 210L347 241Z"/>
          <path d="M780 97Q860 75 975 130Q1010 155 1015 185Q1050 180 1060 210Q1045 250 1000 265L970 260Q930 300 860 297Q740 270 750 170Q755 120 780 97M800 108Q840 100 940 140Q990 165 987 180Q950 190 870 165Q790 130 800 108M1000 208L1030 205Q1020 230 985 243ZM795 200Q820 250 880 227"/>
          <ellipse cx="792" cy="173" rx="9" ry="7" fill="#20262a"/><ellipse cx="900" cy="214" rx="9" ry="7" fill="#20262a"/>
          <path d="M1060 140Q1050 125 1070 122L1105 148L1180 82Q1200 75 1200 92L1115 172Q1105 178 1095 172ZM1145 172L1240 82Q1260 85 1248 100L1160 180Q1145 185 1145 172M1273 197Q1215 205 1218 250Q1240 290 1280 290Q1320 280 1327 242Q1290 260 1273 240Q1255 220 1273 197M1390 0Q1395 30 1370 48Q1380 140 1490 200L1568 150"/>
          <path d="M470 310Q460 260 520 248Q530 225 575 237Q640 210 675 250Q690 280 675 305Q710 340 680 368Q660 380 620 370L500 330Q475 320 470 310M630 270L610 290L630 288M630 305Q610 330 580 325Q550 300 570 275Q595 260 630 280M745 402L828 367L802 443L790 410ZM530 515Q580 410 660 412Q735 420 733 508L545 523Q530 523 530 515"/>
          <ellipse cx="606" cy="470" rx="23" ry="20"/><ellipse cx="664" cy="470" rx="23" ry="20"/><circle cx="598" cy="463" r="6" fill="#20262a"/><circle cx="655" cy="463" r="6" fill="#20262a"/>
          <path d="M1105 325Q1200 300 1270 312Q1340 350 1377 440Q1370 480 1270 482Q1170 480 1115 390Q1095 340 1105 325M1160 315L1118 388M1202 310L1145 422M1325 368L1273 478M1343 398L1303 480M1192 358L1292 395M1220 343L1205 370M1242 352L1225 380M1268 363L1250 390M1292 375L1275 408"/>
          <path d="M990 395Q1050 380 1085 420Q1115 460 1100 510L1030 570Q980 590 920 575Q870 530 875 480Q920 410 990 395M930 510Q920 470 960 455Q1000 425 1040 450Q1060 480 1040 500L985 535Q935 540 930 510M1000 395L995 440M1045 447L1075 425M1050 495L1100 500M1010 520L1040 547M980 537L972 580M935 523L905 550M930 500L875 495M960 455L935 430M972 393Q975 355 1000 360Q1025 370 1018 393M900 452Q850 445 845 470Q850 490 880 483M1100 490Q1140 485 1135 508Q1120 530 1090 520M875 540Q820 555 822 585Q830 605 860 605L905 570M965 580Q960 605 985 608Q1010 600 1010 577"/>
          <path d="M387 560Q380 535 420 535Q430 515 455 520Q480 530 475 545Q510 545 503 570Q490 590 465 580Q440 590 430 580Q395 590 387 560M1147 580Q1140 555 1180 557Q1190 535 1215 542Q1235 550 1232 568Q1270 565 1262 590L1240 605M1175 605Q1150 600 1147 580M228 535L240 575L265 572L275 605L305 548L272 545L268 510"/>
          <ellipse cx="220" cy="680" rx="48" ry="40"/><ellipse cx="336" cy="653" rx="48" ry="40"/><path d="M265 655Q280 650 290 658M172 687L155 692L170 700M380 642L402 640L385 655M372 680L412 690Q400 697 380 688M208 720L188 745Q195 760 213 722"/>
          <ellipse cx="653" cy="610" rx="34" ry="29"/><path d="M678 632L705 655M55 590L130 598L65 635M62 670L112 732L35 703"/>
          <path d="M300 735Q330 730 352 770Q400 780 398 830Q360 870 368 895Q390 940 350 965Q280 990 230 960Q200 930 160 900Q140 860 200 830Q240 820 260 780Q280 740 300 735M300 875Q315 885 307 900"/><ellipse cx="280" cy="892" rx="46" ry="39"/><path d="M290 910H297"/>
          <path d="M497 937L463 715Q465 705 475 703L600 690Q615 693 617 705L645 915M497 937L818 902L808 840M622 742Q630 735 640 737L700 732M545 877L578 872L588 925L555 930ZM708 858L743 853L750 905L717 912ZM502 750L530 745L532 768L505 772ZM557 742L585 740L588 762L560 765ZM507 787L535 783L538 806L512 810ZM562 780L590 776L593 798L566 803ZM513 823L542 819L544 840L516 844ZM568 817L596 813L599 834L572 838ZM672 775L690 770M672 775L675 797L695 793M675 812L703 808L705 830L680 835Z"/>
          <path d="M178 975Q190 1005 230 1008Q195 1020 192 1055Q180 1025 137 1015Q175 1010 178 975M245 1130Q245 1060 360 995Q400 995 440 1010Q450 1020 485 1045Q520 1070 503 1110Q480 1140 470 1125Q475 1090 455 1090Q400 1080 360 1105Q320 1115 325 1145Q270 1160 245 1130M360 995L377 1100M437 1008L422 1090M285 1030L350 1105M485 1045Q470 1060 465 1090M250 1095L328 1130M260 1145Q260 1180 290 1190Q330 1200 330 1180L295 1152"/>
          <path d="M640 975L697 1015Q695 1040 680 1052Q660 1055 650 1045L600 1018ZM560 1115Q560 1100 575 1100L622 1103L617 1155Q605 1170 597 1155V1128Q560 1130 560 1115M597 1105V1128M808 927Q820 925 818 950L850 955V968L822 970L832 995L820 1000L805 975L780 1000L770 990L790 968L763 960L765 948L795 955ZM960 960H975V985L1012 990V1005L980 1010L987 1033L970 1035L962 1012L925 1010V993L958 988ZM1000 885L1100 867L1077 933L1065 910ZM1055 1060L1093 1085L1068 1117L1027 1093ZM1207 1077L1250 1067L1255 1105L1290 1112L1260 1163L1252 1132L1225 1135ZM1050 1215Q1045 1205 1050 1200L1085 1180Q1095 1180 1100 1185L1127 1213L1083 1250ZM1045 1198Q1030 1175 1055 1172Q1075 1178 1075 1190"/><circle cx="652" cy="1018" r="5"/>
          <path d="M1148 840L1147 860Q1230 900 1352 893L1365 840M1157 870L1168 967Q1220 995 1285 988L1340 897M1500 735L1520 760L1515 790M1480 812L1535 808L1485 870L1568 800M1455 900Q1460 880 1485 880Q1515 890 1508 910Q1490 925 1465 915Q1455 910 1455 900M1515 915L1568 910M1462 945Q1465 920 1490 920Q1520 930 1515 955Q1500 970 1475 962Q1462 955 1462 945M1468 990Q1470 962 1500 965Q1525 975 1520 995Q1500 1010 1475 1002Q1468 1000 1468 990M1520 1003L1568 1000"/>
          <path d="M755 1250Q690 1280 735 1235Q670 1240 675 1180Q660 1130 725 1105Q710 1050 810 1055Q830 1030 860 1035Q905 1050 903 1082Q970 1080 972 1130Q1015 1150 985 1185Q970 1210 950 1215Q965 1240 925 1245M765 1200Q740 1220 750 1200Q755 1185 770 1185M900 1170Q930 1175 918 1190Q910 1197 895 1193M765 1185Q745 1100 830 1095Q900 1100 900 1170M770 1160Q790 1120 830 1118Q890 1120 895 1155M790 1165Q795 1155 805 1158M850 1145L870 1152M820 1185Q835 1193 850 1185M855 1205L865 1192"/>
          <ellipse cx="834" cy="1178" rx="67" ry="62"/><circle cx="809" cy="1167" r="4"/><circle cx="852" cy="1162" r="4"/>
          <path d="M815 1240L812 1258L850 1283L887 1243M880 1240L925 1243L1015 1295M812 1258Q770 1255 755 1280L640 1380Q620 1430 680 1495L710 1497M757 1315Q730 1350 752 1385M945 1288Q990 1310 987 1340M722 1397L828 1378L848 1475M830 1390Q850 1370 870 1378L865 1355L975 1337Q985 1340 985 1350L1003 1448M860 1390Q940 1360 945 1425Q935 1470 850 1475M850 1475L1045 1440M990 1180L1045 1410Q1050 1440 1030 1448L540 1528Q510 1530 505 1510L475 1370M615 1212L648 1370M670 1205L455 1237Q445 1245 455 1265M475 1255L500 1270M497 1250L480 1272M503 1335L610 1318M518 1403L625 1386M485 1452L397 1468L455 1535M785 1493L838 1535"/>
          <path d="M1385 1250Q1330 1230 1280 1260Q1230 1280 1190 1330Q1140 1380 1155 1440Q1190 1500 1290 1508Q1380 1490 1400 1380Q1440 1280 1415 1262ZM1405 1265Q1420 1290 1385 1360Q1385 1430 1350 1475Q1320 1500 1240 1498M1190 1360Q1210 1380 1225 1342Q1290 1340 1315 1385Q1330 1420 1290 1445Q1230 1460 1200 1430Q1180 1400 1190 1360M1310 1395L1330 1380M1310 1412L1328 1415M1240 1370Q1250 1355 1265 1362M1245 1390Q1265 1400 1285 1380M1230 1430Q1245 1440 1270 1432M1285 1285Q1285 1305 1310 1303M1325 1310Q1325 1325 1348 1325M1285 1325Q1300 1335 1317 1330M1390 1245L1468 1190M1408 1257L1475 1200"/>
          <path d="M1470 1130L1492 1050Q1500 1040 1530 1050V1065L1520 1075L1527 1090L1515 1100L1510 1130Q1550 1150 1540 1180Q1530 1230 1480 1225Q1420 1220 1418 1190Q1425 1130 1470 1130"/><circle cx="1473" cy="1197" r="14"/>
          <path d="M5 905Q15 840 35 838Q55 850 8 908Q80 865 97 885Q90 920 30 928Q75 930 73 960Q60 975 30 960M35 965Q90 1000 97 1080M25 970Q50 1010 45 1080M0 1085Q60 1075 110 1090Q190 1110 225 1178H0M15 1200L40 1182M75 1215L105 1182M135 1215Q150 1205 170 1217M50 1448L45 1535M55 1535L130 1448M65 1535L240 1450"/>
          <path d="M1435 370Q1420 340 1440 290Q1480 240 1568 240M1435 370Q1470 375 1490 360Q1510 290 1568 285M1455 370Q1455 350 1485 345Q1490 330 1490 310Q1480 290 1520 285M1490 375L1568 387M1468 480L1525 458L1530 480L1475 495ZM1485 475L1490 490M1503 467L1508 485M1475 495Q1450 520 1462 550L1488 645Q1510 660 1568 640M1465 550L1568 530M1535 490Q1568 500 1568 505M1445 660Q1480 700 1568 695M1455 655Q1500 690 1568 675M1435 710L1453 740L1430 755"/>
          <path d="M1358 1537Q1400 1525 1403 1500Q1415 1530 1460 1537M910 1537L990 1530"/>
        </g>

        <!-- sun, scooter and things between the bubbles -->
        <g transform="translate(0 1485)" stroke-width="2">
          <path d="M53 0V12Q60 25 80 22L120 10M110 0L120 22M168 0L168 14L210 0M205 0L235 10Q250 15 245 22L190 40L175 70L165 35M370 0L378 28L422 36Q430 35 430 25V0M380 8L415 16M380 18L405 24M465 0L490 20M518 0L519 14"/>
          <circle cx="519" cy="58" r="42"/><path d="M478 48L448 52L478 70M490 90L475 115L508 98M525 100L540 128L545 95M505 52h1M530 52h1M502 65Q518 80 535 65"/>
          <path d="M8 50L30 25L45 55L25 75ZM60 90L120 60L130 110M70 100Q80 85 100 95L130 130M150 130L195 75L220 130M215 90L245 55L270 110L262 130M255 130L310 105L362 130M275 130L310 112L340 130M325 120Q345 66 402 64Q462 66 482 130M345 125Q362 82 402 80Q448 84 462 128M365 128Q378 98 402 97Q430 100 440 128M330 60L350 40L365 62L350 85ZM130 30L142 44L128 66L140 72M280 70L296 58L306 74L290 86Z"/>
        </g>

        <!-- shrimp, tree, mushroom, board -->
        <g transform="translate(0 1600) scale(.3827 .3333)">
          <path d="M0 15L52 20L40 88L0 80M48 30L0 25M215 0L325 40M215 105V95L270 85L275 105"/>
          <circle cx="322" cy="70" r="25"/>
          <path d="M0 670L18 690M0 695L15 720"/>
          <path d="M235 517Q225 515 220 535L190 660Q190 670 203 663L180 735Q180 745 195 737L173 805Q175 815 195 805Q210 785 225 775Q225 800 235 803Q245 780 252 780Q260 800 270 800Q280 770 290 775Q300 800 310 795Q305 775 315 768Q330 795 345 790L340 765Q370 780 378 765L335 708L353 700L303 640L318 638L245 520ZM217 655Q220 675 235 675Q243 670 240 655M258 722Q265 745 283 738L285 722Q300 745 312 735M257 810L263 872L315 860L300 795"/>
          <path d="M90 815Q95 850 133 862Q100 875 93 912Q85 875 47 867Q85 850 90 815M415 408Q350 450 358 550L415 625Q410 600 445 597Q440 570 430 560Q425 520 450 510Q510 505 510 480Q555 460 555 465M420 410Q380 450 442 515M400 440Q380 500 430 550M440 405Q450 480 480 510M475 410Q460 450 470 505M358 545L432 560M415 628L430 708L460 702L500 660L497 630L448 597M430 640V700M440 605L495 650M450 525L455 515M470 525L475 515M488 522L490 512M505 500Q510 470 555 463Q560 440 530 420L490 405M508 500L610 590L660 598Q690 590 690 540Q690 500 565 408M550 465L618 590"/>
          <circle cx="595" cy="533" r="9"/><path d="M618 590Q690 640 750 600Q800 560 840 520Q860 500 900 507Q920 500 925 470"/><circle cx="835" cy="558" r="19"/>
          <path d="M733 410V435L880 410M730 440L735 480Q740 490 755 488L890 455Q905 450 900 435L890 410M885 545L905 540L922 608L900 613ZM918 552Q960 500 1030 510M925 595Q955 590 960 635L980 637M968 645L995 747L1040 737"/>
          <path d="M468 765Q530 740 590 810Q610 850 600 885L590 892Q550 870 510 830Q470 790 468 765M470 780L595 892M500 835Q430 880 430 910Q440 955 475 958Q500 955 530 885M480 825L500 832V820L520 850L525 845L530 880L545 882L540 850"/>
          <path d="M660 790Q620 740 640 685Q670 640 720 660Q820 750 980 820Q1080 850 1078 920Q1060 990 1000 985L930 940Q830 860 660 790M765 735Q775 725 798 735L795 755L773 808Q765 820 745 800ZM735 775L780 790M760 750L798 765M955 850Q970 835 990 850L985 875L965 920Q955 930 932 910ZM925 885L970 905M950 865L985 880"/>
          <path d="M1095 405Q1110 450 1125 478M1150 405L1170 445M1215 405Q1250 460 1310 460Q1370 450 1390 405M1325 428L1352 400M1325 430H1568M1425 457L1445 432M1105 780L1120 800L1180 755M1120 800Q1180 880 1230 877Q1310 870 1325 790V755M1145 760L1230 870M1180 755L1215 850M1245 755L1270 850M1315 820L1350 862M1458 755L1450 862"/>
          <path d="M1440 190Q1455 230 1450 310M1455 185Q1500 250 1497 315"/>
        </g>
      </g>
      <pattern id="wallpaper" patternUnits="userSpaceOnUse" x="0" y="0" width="991" height="1760">
        <use href="#doodles"/>
        <use href="#doodles" x="-991"/>
        <use href="#doodles" y="-1760"/>
        <use href="#doodles" x="-991" y="-1760"/>
      </pattern>
    </defs>
  </svg>

  <header class="topbar">
    <button class="icon-btn" aria-label="More options">
      <svg viewBox="0 0 24 24" fill="currentColor"><circle cx="12" cy="6" r="2"/><circle cx="12" cy="12" r="2"/><circle cx="12" cy="18" r="2"/></svg>
    </button>
    <button class="icon-btn" aria-label="Voice call">
      <svg viewBox="0 0 24 24" fill="currentColor"><path d="M19.950 21Q16.830 21 13.780 19.640T8.230 15.780 4.360 10.230 3 4.050q0-.45.3-.75T4.050 3H8.100q.35 0 .63.240t.32.560l.65 3.500q.05.4-.03.680T9.400 8.450L6.980 10.900q.5.930 1.190 1.790t1.510 1.660q.78.780 1.630 1.440T13.100 17l2.350-2.350q.22-.23.59-.34t.71-.06l3.450.7q.35.1.58.360T21 15.900v4.050q0 .45-.3.75T19.950 21ZM6.030 9l1.650-1.650L7.250 5H5.020q.13 1.020.35 2.030T6.030 9Zm8.950 8.950q.98.430 1.990.680t2.040.330v-2.200l-2.350-.48Z"/></svg>
    </button>
    <button class="icon-btn video" aria-label="Video call">
      <svg viewBox="0 0 24 24" fill="currentColor"><path fill-rule="evenodd" d="M5 4H17Q19 4 19 6V10.500L23 7V17L19 13.500V18Q19 20 17 20H5Q3 20 3 18V6Q3 4 5 4ZM5 6V18H17V6Z"/></svg>
    </button>
    <h1 class="name">Bunny</h1>
    <div class="avatar">
      B
      <svg class="avatar-timer" viewBox="0 0 44 44">
        <circle cx="22" cy="22" r="22" fill="#0b1014"/>
        <use href="#timer" x="3" y="3" width="38" height="38"/>
        <path d="M32 13L23 26A3 3 0 0 1 19 22Z" fill="currentColor"/>
      </svg>
    </div>
    <button class="icon-btn" aria-label="Back">
      <svg viewBox="0 0 24 24" fill="currentColor"><path d="M12 4l-1.410 1.410L16.170 11H4v2h12.170l-5.580 5.590L12 20l8-8z"/></svg>
    </button>
  </header>

  <main class="chat">
    <svg class="wallpaper" aria-hidden="true"><rect width="100%" height="100%" fill="url(#wallpaper)"/></svg>

    <div class="msg in emoji">
      <div class="row">
        <span class="meta"><time>۲۲:۵۰</time></span>
        <span class="faces" role="img" aria-label="🙂🙂🙂">
          <svg><use href="#smile"/></svg><svg><use href="#smile"/></svg><svg><use href="#smile"/></svg>
        </span>
      </div>
    </div>

    <div class="msg out tail long">
      <p class="text">Unfortunately your privacy photos are on Google now</p>
      <span class="meta"><svg class="ticks"><use href="#ticks"/></svg><time>۲۲:۵۰</time></span>
    </div>

    <div class="msg in tail">
      <div class="row">
        <span class="meta"><time>۲۲:۵۰</time></span>
        <p class="text">Send me</p>
      </div>
    </div>

    <div class="msg out tail">
      <blockquote class="quote purple">
        <b>Bunny</b>
        <span>Send me</span>
      </blockquote>
      <div class="row">
        <span class="meta"><svg class="ticks"><use href="#ticks"/></svg><time>۲۲:۵۱</time></span>
        <p class="text">Wanna see?</p>
      </div>
    </div>

    <div class="msg in tail notice deleted">
      <div class="row">
        <span class="meta"><time>۲۲:۵۱</time></span>
        <p class="text fa" dir="rtl">این پیام حذف شده است</p>
        <svg class="state" viewBox="0 0 56 56" fill="none" stroke="currentColor" stroke-width="6"><circle cx="28" cy="28" r="25"/><path d="M10 10L46 46"/></svg>
      </div>
    </div>

    <div class="msg in next">
      <blockquote class="quote green">
        <b class="fa" dir="rtl">شما</b>
        <span>Wanna see?</span>
      </blockquote>
      <div class="row">
        <span class="meta"><time>۲۲:۵۲</time></span>
        <p class="text">Yes</p>
      </div>
    </div>

    <div class="msg out tail">
      <div class="row">
        <span class="meta"><svg class="ticks"><use href="#ticks"/></svg><time>۲۲:۵۲</time></span>
        <p class="text">Just a moment</p>
      </div>
    </div>

    <div class="msg out next">
      <div class="row">
        <span class="meta"><svg class="ticks"><use href="#ticks"/></svg><time>۲۲:۵۲</time></span>
        <p class="text">I saved one of them</p>
      </div>
    </div>

    <div class="msg in tail">
      <div class="row">
        <span class="meta"><time>۲۲:۵۳</time></span>
        <p class="text">Okey</p>
      </div>
    </div>

    <div class="msg out tail notice opened">
      <div class="row">
        <span class="meta"><svg class="ticks"><use href="#ticks"/></svg><time>۲۲:۵۴</time></span>
        <p class="text fa" dir="rtl">بازشده</p>
        <svg class="state"><use href="#timer"/></svg>
      </div>
    </div>

    <div class="unread fa" dir="rtl">۱ پیام خوانده‌نشده</div>

    <div class="msg in tail emoji small">
      <div class="row">
        <span class="meta"><time>۲۲:۵۴</time></span>
        <span class="faces" role="img" aria-label="🤣🤣🤣🤣🤣🤣">
          <svg><use href="#rofl"/></svg><svg><use href="#rofl"/></svg><svg><use href="#rofl"/></svg><svg><use href="#rofl"/></svg><svg><use href="#rofl"/></svg><svg><use href="#rofl"/></svg>
        </span>
      </div>
    </div>
  </main>
</body>
</html>
```

FILE: styles.css
```css
* {
  box-sizing: border-box;
}
body {
  margin: 0;
  min-height: 100vh;
  display: flex;
  flex-direction: column;
  background: #0b1014;
  color: #f7f8fa;
  font-family: Roboto, "Noto Naskh Arabic", "DejaVu Sans", sans-serif;
}
.defs {
  position: absolute;
  width: 0;
  height: 0;
}

/* header */
.topbar {
  display: flex;
  align-items: center;
  height: 151px;
  padding: 0 1px 2px 28px;
  border-bottom: 2px solid #1d2327;
}
.icon-btn {
  margin: 0 48px 0 0;
  padding: 0;
  border: 0;
  background: none;
  color: #f7f8fa;
  cursor: pointer;
}
.icon-btn:last-child {
  margin: 0;
}
.icon-btn svg {
  display: block;
  width: 67px;
  height: 67px;
}
.icon-btn.video {
  margin-left: 14px;
}
.name {
  flex: 1;
  margin: 0 35px 0 0;
  text-align: right;
  font-size: 46px;
  font-weight: 400;
}
.avatar {
  position: relative;
  width: 96px;
  height: 96px;
  border-radius: 50%;
  background: #242345;
  color: #a78ffb;
  font-size: 42px;
  font-weight: 500;
  line-height: 96px;
  text-align: center;
}
.avatar-timer {
  position: absolute;
  left: -11px;
  bottom: -11px;
  width: 44px;
  height: 44px;
  color: #f0f3f4;
}

/* messages */
.chat {
  position: relative;
  flex: 1;
  display: flex;
  flex-direction: column;
  align-items: flex-start;
  padding: 4px 47px 22px;
}
.wallpaper {
  position: absolute;
  top: -151px;
  left: 0;
  width: 100%;
  height: calc(100% + 151px);
  clip-path: inset(151px 0 0 0);
}
.msg {
  position: relative;
  max-width: 89%;
  margin-top: 28px;
  padding-bottom: 14px;
  border-radius: 32px;
}
.msg.in {
  align-self: flex-end;
  background: #20272a;
}
.msg.out {
  background: #144d37;
}
.msg.next {
  margin-top: 7px;
}
.msg.emoji:nth-of-type(1) {
  margin-top: 0;
}
.msg.tail.out {
  border-top-left-radius: 0;
}
.msg.tail.in {
  border-top-right-radius: 0;
}
.msg.tail::before {
  content: "";
  position: absolute;
  top: 0;
  left: -19px;
  width: 20px;
  height: 29px;
  background: inherit;
  clip-path: path("M20 0H5Q-2 1 2 7L20 29Z");
}
.msg.tail.in::before {
  left: auto;
  right: -19px;
  transform: scaleX(-1);
}
.row {
  display: flex;
  align-items: flex-end;
  justify-content: space-between;
  padding: 18px 27px 0 24px;
}
.text {
  margin: 0;
  padding-bottom: 8px;
  font-size: 46px;
  line-height: 54px;
}
.meta {
  display: flex;
  align-items: center;
  height: 34px;
  margin-right: 22px;
  color: #8fa39b;
  font-size: 30px;
}
.in .meta {
  height: 28px;
  margin-right: 40px;
  color: #9a9fa1;
}
.ticks {
  width: 44px;
  height: 28px;
  margin-right: 12px;
}
.long {
  max-width: 876px;
  padding: 18px 24px 14px;
}
.long .text {
  padding: 0 50px 22px 8px;
}

/* quoted message */
.quote {
  display: flex;
  flex-direction: column;
  align-items: flex-end;
  margin: 0 10px -5px;
  padding: 15px 33px 0 24px;
  height: 132px;
  border-radius: 22px;
  background: linear-gradient(#a78ffb, #a78ffb) right / 11px 100% no-repeat #154332;
  color: #9db5ab;
  font-size: 39px;
  line-height: 54px;
}
.msg:has(.quote) {
  padding-top: 10px;
}
.quote b {
  color: #d8d0ff;
  font-size: 41px;
  font-weight: 500;
}
.quote.green {
  min-width: 330px;
  margin-bottom: 0;
  background: linear-gradient(#21c063, #21c063) right / 11px 100% no-repeat #1d2429;
  color: #8d9294;
}
.quote.green b {
  color: #aee6c4;
}

/* deleted and view-once notices */
.fa {
  font-family: "Noto Naskh Arabic", "DejaVu Sans", sans-serif;
}
.notice .text {
  padding-bottom: 10px;
  font-size: 44px;
  font-style: italic;
}
.notice .state {
  width: 56px;
  height: 56px;
  margin: 0 0 8px 24px;
}
.notice .row {
  padding-top: 22px;
}
.deleted {
  color: #a9abac;
}
.deleted .state {
  color: #8f979a;
}
.opened {
  color: #a3bfb2;
}
.opened .row {
  padding-left: 19px;
  padding-right: 15px;
}
.opened .meta {
  margin-right: 163px;
}
.unread {
  position: relative;
  align-self: center;
  margin: 25px 0 37px;
  padding: 0 56px;
  border-radius: 46px;
  background: #12171b;
  font-size: 32px;
  line-height: 91px;
}
.unread + .msg {
  margin-top: 0;
}

/* emoji only */
.faces {
  display: flex;
  gap: 5px;
  padding: 8px 3px 15px 0;
}
.faces svg {
  width: 75px;
  height: 76px;
}
.small .faces {
  padding: 7px 4px 14px 0;
}
.small .faces svg {
  width: 64px;
  height: 66px;
}
```
